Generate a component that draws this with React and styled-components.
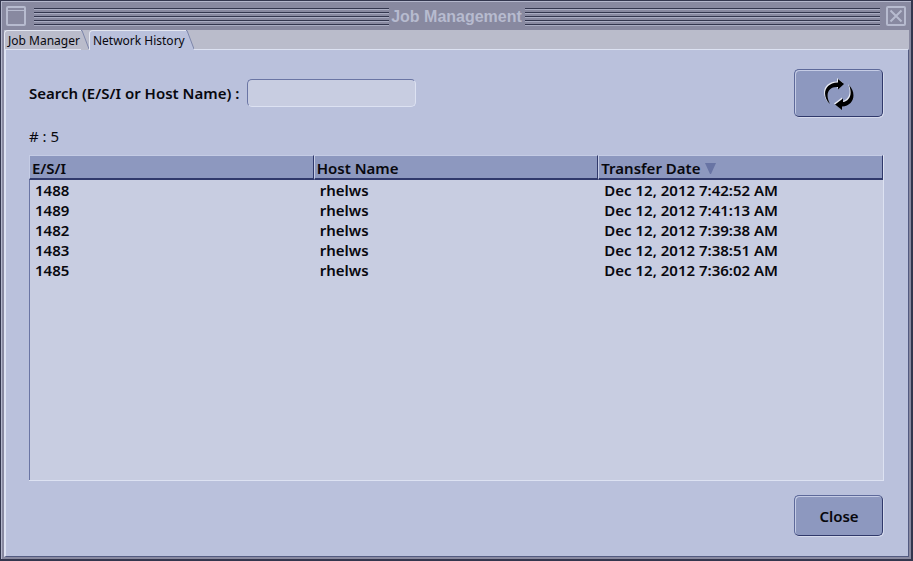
import React, { useState } from 'react';
import styled, { createGlobalStyle, css } from 'styled-components';

const GlobalStyle = createGlobalStyle`
  * { box-sizing: border-box; }
  body { margin: 0; background: #8889a0; }
`;

const uiFont = css`
  font-family: "Noto Sans", "DejaVu Sans", sans-serif;
  color: #08080e;
`;

const Window = styled.div`
  ${uiFont}
  display: flex;
  flex-direction: column;
  min-height: 100vh;
  background: #8889a0;
  border: solid #33364e;
  border-width: 1px 2px 2px 1px;
`;

const Frame = styled.div`
  flex: 1;
  display: flex;
  flex-direction: column;
  border: solid #b4b7cc;
  border-width: 1px 0 0 1px;
  padding: 0 2px 2px 2px;
`;

const TitleBar = styled.header`
  display: flex;
  align-items: center;
  height: 28px;
  padding: 0 3px 0 2px;
`;

const FrameButton = styled.button`
  width: 20px;
  height: 20px;
  padding: 0;
  border: 0;
  background: none;
  flex: none;
  svg { display: block; }
`;

const Stripes = styled.div`
  flex: 1;
  height: 18px;
  background: repeating-linear-gradient(#33364e 0 1px, #a9acc2 1px 2px, #8889a0 2px 4px);
  margin: ${(p) => (p.$side === 'left' ? '2px 2px 0 8px' : '2px 6px 0 3px')};
`;

const Title = styled.h1`
  margin: 0;
  font: bold 16px/20px "Liberation Sans", Arial, sans-serif;
  padding-top: 2px;
  color: #b7bbcf;
`;

const TabStrip = styled.div`
  display: flex;
  align-items: flex-end;
  height: 19px;
  background: #babccb;
`;

const Tab = styled.button`
  ${uiFont}
  display: flex;
  align-items: stretch;
  height: ${(p) => (p.$active ? 20 : 19)}px;
  margin-bottom: ${(p) => (p.$active ? -1 : 0)}px;
  padding: 0;
  border: 0;
  background: none;
  position: relative;
  z-index: ${(p) => (p.$active ? 1 : 0)};
  font-size: 12px;
  line-height: 20px;
  white-space: nowrap;
`;

const TabLabel = styled.span`
  padding: 0 1px 0 3px;
  border: solid #e4e7f2;
  border-width: 1px 0 0 1px;
  border-top-left-radius: 4px;
  background: ${(p) => (p.$active ? '#bac1dc' : '#babccb')};
`;

const Pane = styled.main`
  flex: 1;
  display: flex;
  flex-direction: column;
  background: #bac1dc;
  border: 1px solid #525a80;
  border-top-color: #dde2f2;
  border-left: 2px solid #dde2f2;
  padding: 19px 24px 20px 23px;
`;

const Toolbar = styled.div`
  display: flex;
  justify-content: space-between;
  align-items: center;
  padding-right: 1px;
`;

const SearchLabel = styled.label`
  display: flex;
  align-items: center;
  gap: 8px;
  font-size: 15px;
  font-weight: 600;
  line-height: 20px;
`;

const SearchInput = styled.input`
  ${uiFont}
  width: 169px;
  height: 28px;
  padding: 0 6px;
  font-size: 15px;
  font-weight: 600;
  background: #c8cde1;
  border: 1px solid #6a75a4;
  border-right-color: #dde2f2;
  border-bottom-color: #dde2f2;
  border-radius: 5px;
  outline: 0;
`;

const PushButton = styled.button`
  ${uiFont}
  display: flex;
  align-items: center;
  justify-content: center;
  width: 89px;
  height: ${(p) => (p.$tall ? 48 : 41)}px;
  padding: 1px 0 0 1px;
  font-size: 15px;
  font-weight: 600;
  background: #8d98bf;
  border: 1px solid #5d699a;
  border-right-color: #30396b;
  border-bottom-color: #30396b;
  border-radius: 5px;
  box-shadow: inset 1px 1px 0 #c5cce5, 1px 1px 0 #d5daec;
`;

const Count = styled.p`
  margin: 9px 0;
  font-size: 15px;
  line-height: 20px;
`;

const TablePanel = styled.div`
  flex: 1;
  background: #c8cde1;
  border: solid #dde2f2;
  border-width: 0 1px 1px 0;
  box-shadow: inset 1px 0 0 #6a75a4;
`;

const Table = styled.table`
  width: 100%;
  table-layout: fixed;
  border-collapse: separate;
  border-spacing: 0;
  font-size: 15px;
  font-weight: 600;
  line-height: 20px;
  text-align: left;
`;

const HeadCell = styled.th`
  height: 25px;
  padding: 1px 0 0 2px;
  font-weight: 600;
  background: #8d98bf;
  border: solid #30396b;
  border-width: 1px 1px 2px 1px;
  border-top-color: #c5cce5;
  border-left-color: #c5cce5;
  svg { margin-left: 5px; }
`;

const Cell = styled.td`
  height: 20px;
  padding: 0 0 0 6px;
`;

const Footer = styled.footer`
  display: flex;
  justify-content: flex-end;
  margin-top: 14px;
  padding-right: 1px;
`;

const Slant = ({ active }) => (
  <svg width="8" height="20" viewBox="0 0 8 20" aria-hidden="true">
    <path d="M0 0h1L8 20H0z" fill={active ? '#bac1dc' : '#babccb'} />
    <path d="M0 .5h1L8 19" fill="none" stroke="#7d86aa" />
  </svg>
);

const MenuGlyph = () => (
  <svg width="20" height="20" viewBox="0 0 20 20" fill="none" stroke="#b7bbcf" aria-hidden="true">
    <rect x="1" y="1" width="18" height="18" rx="1" strokeWidth="2" />
    <path d="M2 4.5h16" />
  </svg>
);

const CloseGlyph = () => (
  <svg width="20" height="20" viewBox="0 0 20 20" fill="none" stroke="#b7bbcf" aria-hidden="true">
    <rect x="1" y="1" width="18" height="18" rx="1" strokeWidth="2" />
    <path d="M4.5 4.5l11 11M15.5 4.5l-11 11" strokeWidth="2" />
  </svg>
);

const arrows =
  'M7 26C-1 19 0 5 15 4.500L15 1L21 6L15 11.500V9C7 8 1 15 7 26z M26 7C34 15 31 28 19 28.500V32L12 26.500L20 20.500V24C26 23 30 17 26 7z';

const RefreshGlyph = () => (
  <svg width="32" height="32" viewBox="0 0 32 32" aria-hidden="true">
    <path d={arrows} fill="#e9ecf5" transform="translate(-1 -1)" />
    <path d={arrows} fill="#000" />
  </svg>
);

const SortGlyph = () => (
  <svg width="11" height="11" viewBox="0 0 11 11" role="img" aria-label="descending">
    <path d="M0 0h11L6 11H5z" fill="#6874a4" />
  </svg>
);

const tabs = ['Job Manager', 'Network History'];

const transfers = [
  ['1488', 'rhelws', 'Dec 12, 2012 7:42:52 AM'],
  ['1489', 'rhelws', 'Dec 12, 2012 7:41:13 AM'],
  ['1482', 'rhelws', 'Dec 12, 2012 7:39:38 AM'],
  ['1483', 'rhelws', 'Dec 12, 2012 7:38:51 AM'],
  ['1485', 'rhelws', 'Dec 12, 2012 7:36:02 AM'],
];

export default function App() {
  const [active, setActive] = useState(1);
  const [query, setQuery] = useState('');
  const rows = transfers.filter(([id, host]) => id.includes(query) || host.includes(query));

  return (
    <>
      <GlobalStyle />
      <Window>
        <Frame>
          <TitleBar>
            <FrameButton aria-label="Window menu"><MenuGlyph /></FrameButton>
            <Stripes $side="left" />
            <Title>Job Management</Title>
            <Stripes $side="right" />
            <FrameButton aria-label="Close window"><CloseGlyph /></FrameButton>
          </TitleBar>
          <TabStrip role="tablist">
            {tabs.map((name, i) => (
              <Tab key={name} role="tab" aria-selected={i === active} $active={i === active} onClick={() => setActive(i)}>
                <TabLabel $active={i === active}>{name}</TabLabel>
                <Slant active={i === active} />
              </Tab>
            ))}
          </TabStrip>
          <Pane>
            <Toolbar>
              <SearchLabel>
                Search (E/S/I or Host Name) :
                <SearchInput type="text" value={query} onChange={(e) => setQuery(e.target.value)} />
              </SearchLabel>
              <PushButton $tall aria-label="Refresh"><RefreshGlyph /></PushButton>
            </Toolbar>
            <Count># : {rows.length}</Count>
            <TablePanel>
              <Table>
                <thead>
                  <tr>
                    <HeadCell>E/S/I</HeadCell>
                    <HeadCell>Host Name</HeadCell>
                    <HeadCell aria-sort="descending">Transfer Date<SortGlyph /></HeadCell>
                  </tr>
                </thead>
                <tbody>
                  {rows.map((row) => (
                    <tr key={row[0]}>
                      {row.map((value, i) => <Cell key={i}>{value}</Cell>)}
                    </tr>
                  ))}
                </tbody>
              </Table>
            </TablePanel>
            <Footer>
              <PushButton>Close</PushButton>
            </Footer>
          </Pane>
        </Frame>
      </Window>
    </>
  );
}
